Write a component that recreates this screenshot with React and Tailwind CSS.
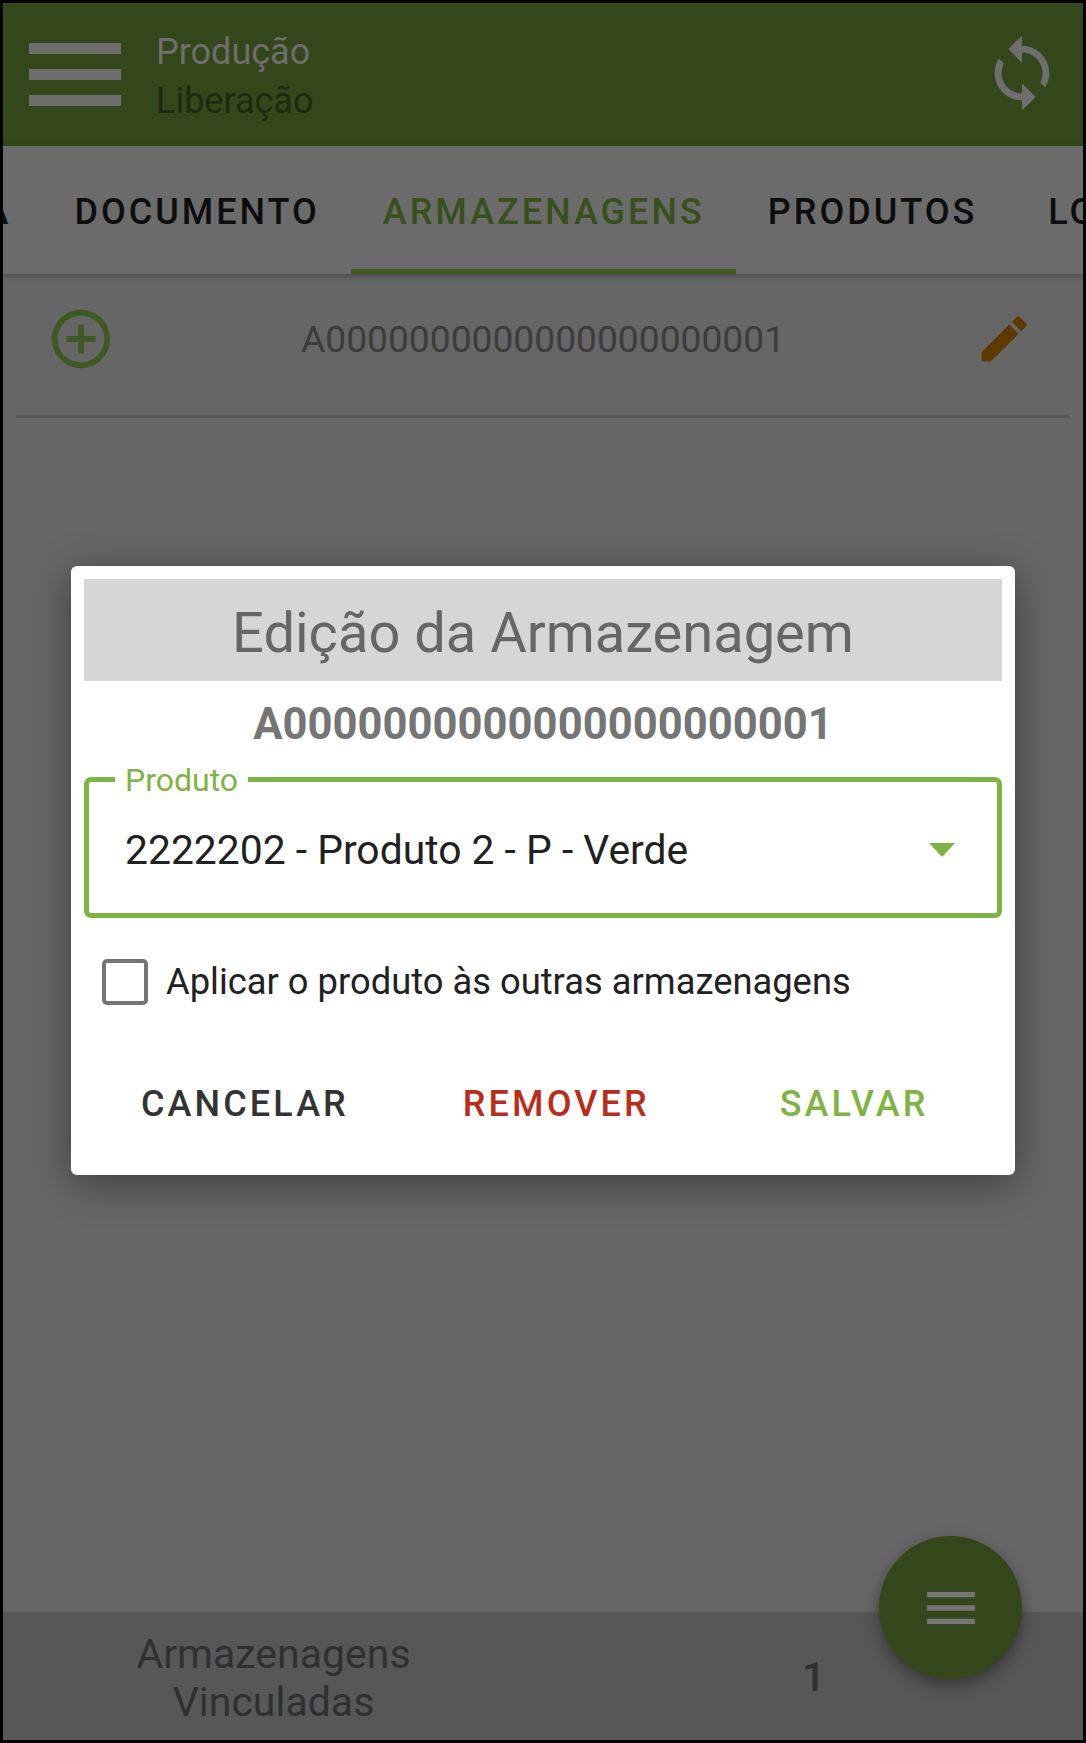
import { MdSync, MdAddCircleOutline, MdEdit, MdMenu } from 'react-icons/md';

const font = { fontFamily: 'Roboto, sans-serif' };

function Tab({ label, active, className }) {
  return (
    <div className={'relative flex h-full shrink-0 items-center px-[31.5px] pt-[3px] text-[36px] font-medium tracking-[3px] ' + (active ? 'text-[#38501c] ' : 'text-[#0d0d0d] ') + (className || '')}>
      {label}
      {active && <div className="absolute bottom-0 left-0 right-0 h-[5px] bg-[#3f5a20]" />}
    </div>
  );
}

function EditDialog() {
  return (
    <div className="absolute inset-0 pt-[563px] pl-[68px]">
      <div className="w-[944px] rounded-[6px] bg-white p-[13px] shadow-[0_8px_40px_rgba(0,0,0,0.4)]">
        <div className="flex h-[102px] items-center justify-center bg-[#d6d6d6] pt-[6px] text-[56px] text-[#666]">Edição da Armazenagem</div>
        <div className="mt-[20px] text-center text-[43.6px] leading-[48px] font-bold text-[#757575]">A0000000000000000000001</div>
        <div className="relative mt-[28px] flex h-[141px] items-center justify-between rounded-[7px] border-[5px] border-[#7fb344] pt-[6px] pr-[42px] pl-[36px]">
          <div className="absolute top-[-20px] left-[26px] bg-white px-[10px] text-[32px] leading-[36px] text-[#7fb344]">Produto</div>
          <span className="text-[40.85px] text-[#212121]">2222202 - Produto 2 - P - Verde</span>
          <svg className="mb-[2px]" width="26" height="14" viewBox="0 0 26 14"><path d="M0 0h26L13 14z" fill="#7fb344" /></svg>
        </div>
        <div className="mt-[37px] flex items-center pl-[18px]">
          <div className="h-[46px] w-[46px] rounded-[5px] border-[4px] border-[#757575]" />
          <span className="ml-[18px] text-[36.35px] text-[#212121]">Aplicar o produto às outras armazenagens</span>
        </div>
        <div className="mt-[67px] mb-[31px] flex items-center text-[36px] font-medium tracking-[3.1px]">
          <span className="ml-[57px] text-[#333]">CANCELAR</span>
          <span className="ml-[114px] text-[#b92d1c]">REMOVER</span>
          <span className="ml-[130px] text-[#7fb344]">SALVAR</span>
        </div>
      </div>
    </div>
  );
}

export default function App() {
  return (
    <div style={font} className="relative h-[1743px] w-[1086px] overflow-hidden border-[3px] border-black bg-[#666]">
      <div className="flex h-[143px] items-center bg-[#33471a] pr-[20px] pl-[26px]">
        <div className="flex w-[92px] flex-col gap-[15px]">
          <div className="h-[11px] bg-[#6e6e6e]" />
          <div className="h-[11px] bg-[#6e6e6e]" />
          <div className="h-[11px] bg-[#6e6e6e]" />
        </div>
        <div className="ml-[35px] flex-1 pt-[4px] text-[36px] leading-[49px]">
          <div className="text-[#6e6e6e]">Produção</div>
          <div className="text-[#1f2a10]">Liberação</div>
        </div>
        <MdSync className="mb-[3px] text-[#6e6e6e]" size={82} />
      </div>
      <div className="flex h-[128px] items-center overflow-hidden bg-[#6b6b6b] shadow-[0_2px_6px_rgba(0,0,0,0.3)]">
        <Tab label="A" className="ml-[-50px]" />
        <Tab label="DOCUMENTO" />
        <Tab label="ARMAZENAGENS" active />
        <Tab label="PRODUTOS" />
        <Tab label="LO" className="ml-[8px]" />
      </div>
      <div className="mr-[13px] ml-[13px] flex h-[144px] items-center border-b-[3px] border-[#575757] pr-[36px] pb-[12px] pl-[30px]">
        <MdAddCircleOutline className="text-[#3f5a20]" size={70} />
        <span className="ml-[185px] pt-[3px] text-[37.2px] text-[#3c3c3c]">A0000000000000000000001</span>
        <MdEdit className="ml-auto text-[#5f3a00]" size={60} />
      </div>
      <div className="absolute right-0 bottom-0 left-0 flex h-[128px] items-center bg-[#575757] text-[#303030]">
        <div className="w-[541px] pt-[4px] text-center text-[41px] leading-[48px]">Armazenagens<br />Vinculadas</div>
        <div className="ml-[258px] pt-[4px] text-[41px] font-medium">1</div>
      </div>
      <div className="absolute right-[61px] bottom-[61px] flex h-[143px] w-[143px] items-center justify-center rounded-full bg-[#33471a] shadow-[0_6px_16px_rgba(0,0,0,0.4)]">
        <MdMenu className="text-[#767676]" size={64} />
      </div>
      <EditDialog />
    </div>
  );
}
